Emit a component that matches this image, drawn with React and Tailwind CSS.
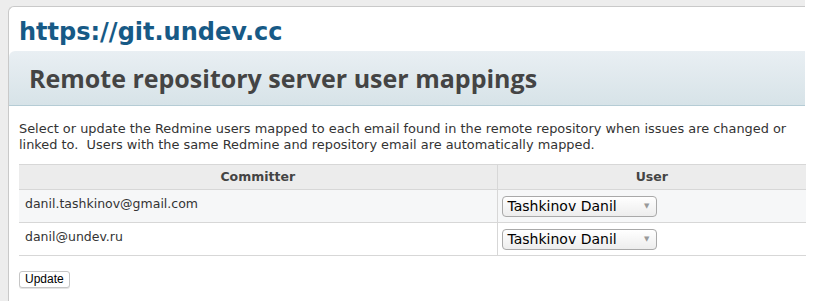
import React from "react";

const rows = [
  { email: "danil.tashkinov@gmail.com", user: "Tashkinov Danil", bg: "bg-[#f6f7f8]" },
  { email: "danil@undev.ru", user: "Tashkinov Danil", bg: "bg-white" },
];

const UserSelect = ({ value }) => {
  return (
    <div className="flex items-center justify-between w-[155px] h-[21px] pl-[5px] pr-[6px] rounded-[4px] border border-[#a9a9a9] bg-gradient-to-b from-white to-[#ededed] text-[14px] text-black">
      <span>{value}</span>
      <span className="text-[7px] text-[#999]">▼</span>
    </div>
  );
};

const App = () => {
  return (
    <div className="w-[813px] h-[301px] bg-white overflow-hidden font-['DejaVu_Sans',sans-serif]">
      <div className="w-[805px] h-full bg-[#ededed] pl-[8px] pt-[6px]">
        <div className="h-full bg-white border-l border-t border-[#c9c9c9] rounded-tl-[6px]">
          <h1 className="pl-[10px] pt-[10px] h-[44px] text-[24px] font-bold leading-[30px] text-[#175a86]">
            https://git.undev.cc
          </h1>
          <div className="h-[55px] flex items-center pl-[20px] bg-gradient-to-b from-[#e9eff3] to-[#d7e3e8] border-b border-[#b5ccd5] rounded-tl-[6px]">
            <h2 className="text-[25px] font-bold text-[#444] pt-[2px] font-['Open_Sans',sans-serif]">
              Remote repository server user mappings
            </h2>
          </div>
          <div className="pl-[10px] pt-[15px]">
            <p className="text-[12.9px] leading-[16px] text-[#333]">
              Select or update the Redmine users mapped to each email found in the remote repository when issues are changed or
              <br />
              linked to.&nbsp; Users with the same Redmine and repository email are automatically mapped.
            </p>
            <table className="mt-[11px] w-[787px] border-collapse text-[12.5px] text-[#333]">
              <thead>
                <tr className="bg-[#ececec] h-[25px] border-t border-b border-[#d7d7d7]">
                  <th className="w-[478px] font-bold text-center text-[#444] border-r border-[#d7d7d7]">Committer</th>
                  <th className="font-bold text-center text-[#444]">User</th>
                </tr>
              </thead>
              <tbody>
                {rows.map((r) => (
                  <tr key={r.email} className={`${r.bg} h-[33px] border-b border-[#d7d7d7]`}>
                    <td className="pl-[6px] align-top pt-[5px] border-r border-[#d7d7d7]">{r.email}</td>
                    <td className="pl-[4px] align-middle">
                      <UserSelect value={r.user} />
                    </td>
                  </tr>
                ))}
              </tbody>
            </table>
            <button className="mt-[15px] h-[17px] px-[5px] rounded-[3px] border border-[#c6c6c6] bg-white text-[12px] leading-[15px] text-black font-['Liberation_Sans',sans-serif] shadow-[0_1px_0_#e5e5e5]">
              Update
            </button>
          </div>
        </div>
      </div>
    </div>
  );
};

export default App;
